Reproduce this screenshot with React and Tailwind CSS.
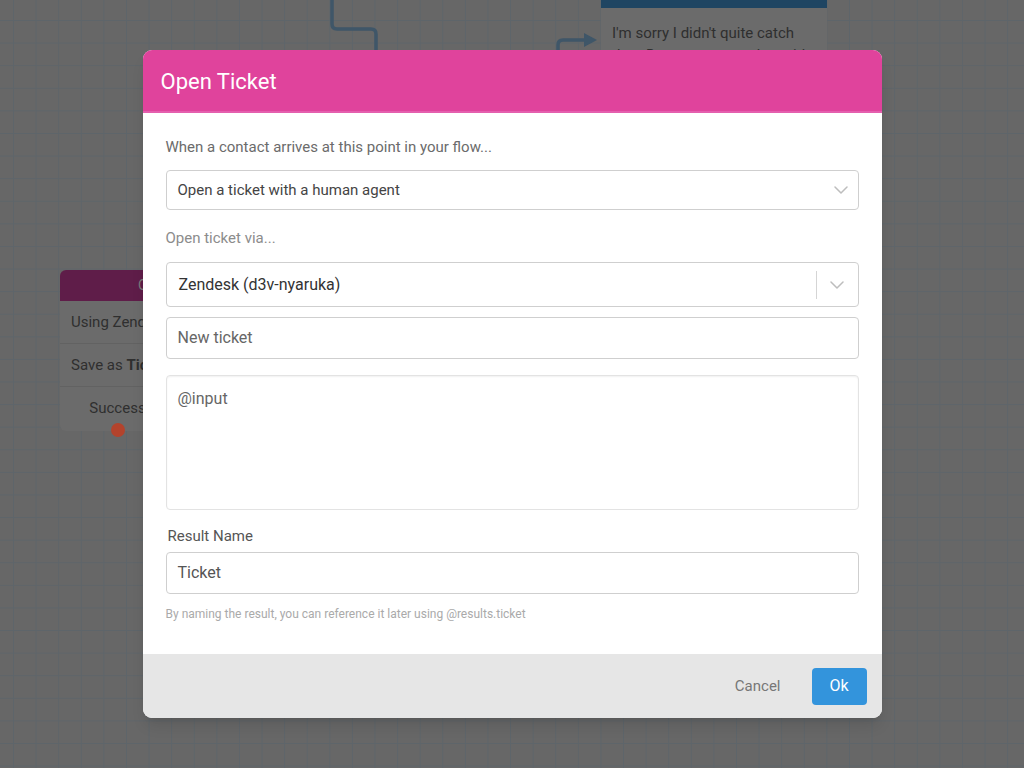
import React from 'react';

function Chevron() {
  return (
    <svg width="14" height="8" viewBox="0 0 14 8" fill="none">
      <polyline points="1,1 7,7 13,1" stroke="#bdbdbd" strokeWidth="1.5" strokeLinecap="round" strokeLinejoin="round" />
    </svg>
  );
}

// dimmed flow canvas behind the modal
function Canvas() {
  return (
    <>
      {/* connectors */}
      <svg className="absolute left-0 top-0" width="1024" height="80" viewBox="0 0 1024 80" fill="none">
        <path d="M332 0 V24 Q332 29 337 29 H371 Q376 29 376 34 V60" stroke="#3f5668" strokeWidth="3.5" />
        <path d="M558 60 V45 Q558 40 563 40 H586" stroke="#3f5668" strokeWidth="3.5" />
        <polygon points="584,33 597,40 584,47" fill="#3f5668" />
      </svg>

      {/* top right node */}
      <div className="absolute left-[601px] top-0 w-[226px]">
        <div className="h-[8px] bg-[#1f4562]" />
        <div className="bg-[#6b6b6b] px-[11px] pt-[14px] pb-6 text-[15px] leading-[22px] text-[#2f2f2f]">
          I'm sorry I didn't quite catch that. Do you want to chat with someone?
        </div>
      </div>

      {/* left node */}
      <div className="absolute left-[60px] top-[270px] w-[230px] rounded-[6px] bg-[#6b6b6b]">
        <div className="h-[31px] rounded-t-[6px] bg-[#5f1d49] text-center text-[14px] leading-[31px] text-[#7a7a7a]">
          Open Ticket
        </div>
        <div className="border-b border-[#626262] px-[11px] py-[10px] text-[15px] leading-[22px] text-[#2f2f2f]">
          Using Zendesk
        </div>
        <div className="border-b border-[#626262] px-[11px] py-[10px] text-[15px] leading-[22px] text-[#2f2f2f]">
          Save as <span className="font-bold">Ticket</span>
        </div>
        <div className="flex text-[15px] leading-[22px] text-[#2f2f2f]">
          <div className="relative flex-1 pt-[10px] pb-[12px] text-center">
            Success
            <span className="absolute left-1/2 top-[36px] h-[14px] w-[14px] -translate-x-1/2 rounded-full bg-[#b3432c]" />
          </div>
          <div className="relative flex-1 pt-[10px] pb-[12px] text-center">
            Failure
          </div>
        </div>
      </div>
    </>
  );
}

export default function App() {
  return (
    <div
      className="relative flex h-[768px] w-full items-center justify-center overflow-hidden bg-[#676767] bg-[image:linear-gradient(to_right,#5e656a_1px,transparent_1px),linear-gradient(to_bottom,#5e656a_1px,transparent_1px)] bg-[size:22.6px_22.6px] bg-[position:13px_20px]"
      style={{ fontFamily: 'Roboto, "Liberation Sans", sans-serif' }}
    >
      <Canvas />

      {/* Modal */}
      <div className="relative z-10 flex h-[668px] w-[739px] flex-col overflow-hidden rounded-[9px] bg-white shadow-lg">
        <div className="flex h-[63px] items-center border-b-2 border-[#e45fae] bg-[#e0439c] px-[18px] pt-[1px]">
          <h1 className="text-[22px] font-normal text-white">Open Ticket</h1>
        </div>

        <div className="flex flex-1 flex-col px-[23px] pt-[24px]">
          <div className="text-[15px] leading-[20px] text-[#6b6b6b]">
            When a contact arrives at this point in your flow...
          </div>
          <div className="mt-[13px] flex h-[40px] items-center justify-between rounded-[4px] border border-[#cfcfcf] pl-[11px] pr-[10px]">
            <span className="text-[15px] text-[#444]">Open a ticket with a human agent</span>
            <Chevron />
          </div>

          <div className="mt-[18px] text-[15px] leading-[20px] text-[#8c8c8c]">Open ticket via...</div>
          <div className="mt-[14px] flex h-[45px] items-center rounded-[4px] border border-[#cfcfcf] pl-[12px]">
            <span className="flex-1 text-[16px] text-[#333]">Zendesk (d3v-nyaruka)</span>
            <span className="h-[28px] w-px bg-[#d5d5d5]" />
            <span className="flex w-[41px] justify-center">
              <Chevron />
            </span>
          </div>

          <div className="mt-[10px] flex h-[42px] items-center rounded-[4px] border border-[#cfcfcf] px-[11px]">
            <span className="text-[16px] text-[#666]">New ticket</span>
          </div>

          <div className="mt-[16px] h-[135px] rounded-[4px] border border-[#e3e3e3] px-[11px] pt-[11px] shadow-[inset_0_1px_2px_rgba(0,0,0,0.06)]">
            <span className="text-[16px] text-[#666]">@input</span>
          </div>

          <div className="mt-[16px] pl-[2px] text-[15px] leading-[20px] text-[#555]">Result Name</div>
          <div className="mt-[6px] flex h-[42px] items-center rounded-[4px] border border-[#cfcfcf] px-[11px]">
            <span className="text-[16px] text-[#555]">Ticket</span>
          </div>
          <div className="mt-[12px] text-[12px] leading-[16px] text-[#aaa]">
            By naming the result, you can reference it later using @results.ticket
          </div>
        </div>

        <div className="flex h-[64px] items-center justify-end bg-[#e6e6e6] pr-[15px]">
          <button className="mr-[31px] text-[15px] text-[#777]">Cancel</button>
          <button className="h-[37px] w-[55px] rounded-[4px] bg-[#3394dc] text-[16px] text-white">Ok</button>
        </div>
      </div>
    </div>
  );
}
